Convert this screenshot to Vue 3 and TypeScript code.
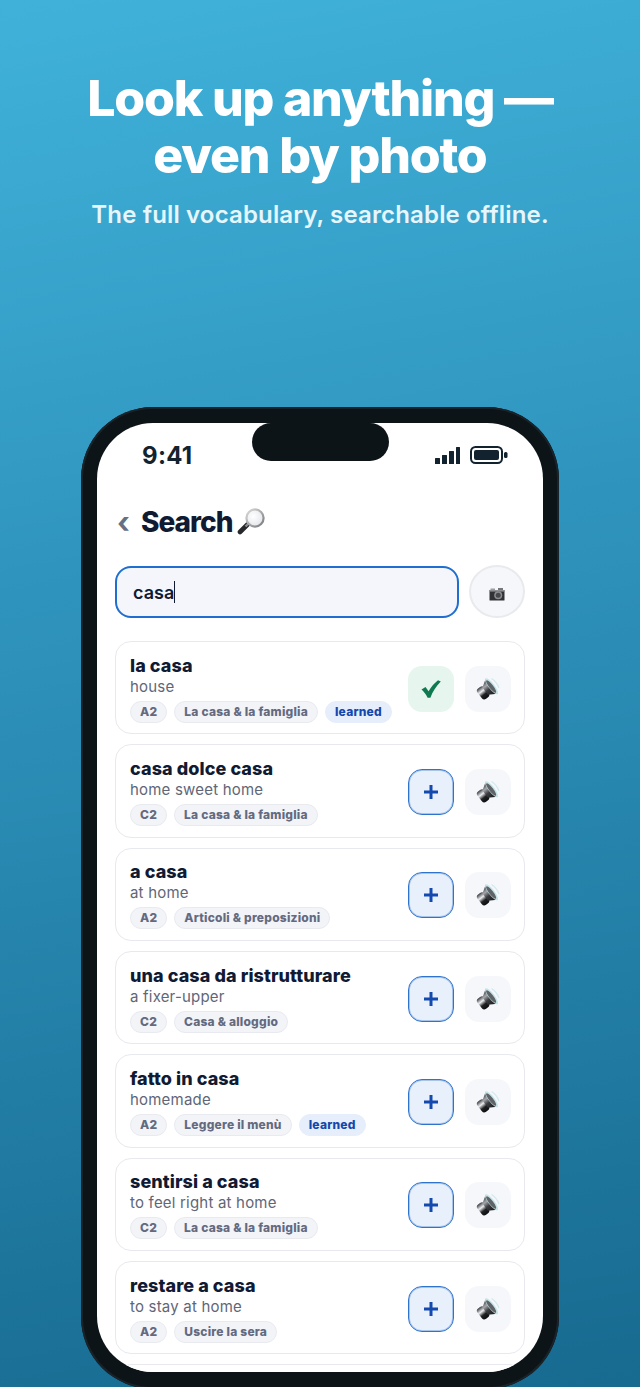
<template>
  <div class="page">
    <header class="hero">
      <h1>Look up anything —<br />even by photo</h1>
      <p>The full vocabulary, searchable offline.</p>
    </header>

    <div class="phone">
      <div class="screen">
        <div class="island"></div>

        <div class="status">
          <span class="time">9:41</span>
          <div class="status-icons">
            <svg width="26" height="17" viewBox="0 0 26 17">
              <rect x="0" y="11" width="5" height="6" rx="0.5" />
              <rect x="7" y="8" width="5" height="9" rx="0.5" />
              <rect x="14" y="4" width="5" height="13" rx="0.5" />
              <rect x="21" y="0" width="4" height="17" rx="0.5" />
            </svg>
            <svg width="38" height="18" viewBox="0 0 38 18">
              <rect x="1" y="1" width="31" height="16" rx="4.5" fill="none" stroke="#12232f" stroke-width="2" />
              <rect x="4" y="4" width="25" height="10" rx="2" />
              <rect x="34" y="6" width="3.5" height="6" rx="1.5" />
            </svg>
          </div>
        </div>

        <div class="title-row">
          <span class="back">‹</span>
          <h2>Search</h2>
          <svg class="glass" width="30" height="30" viewBox="0 0 30 30">
            <defs>
              <radialGradient id="lens" cx="0.4" cy="0.4" r="0.7">
                <stop offset="0" stop-color="#ffffff" />
                <stop offset="1" stop-color="#dfe3e8" />
              </radialGradient>
              <linearGradient id="rim" x1="0" y1="0" x2="1" y2="1">
                <stop offset="0" stop-color="#dcdcdc" />
                <stop offset="1" stop-color="#77797c" />
              </linearGradient>
            </defs>
            <path d="M10.5 17.5 L3 25" stroke="#26282b" stroke-width="4.6" stroke-linecap="round" />
            <path d="M11.5 16.5 L8.5 19.5" stroke="#8b8e92" stroke-width="2.4" />
            <circle cx="18" cy="11" r="8.6" fill="url(#lens)" stroke="url(#rim)" stroke-width="2.2" />
          </svg>
        </div>

        <div class="search-row">
          <div class="search-box">
            <span class="query">casa</span><span class="caret"></span>
          </div>
          <button class="camera" type="button">
            <svg width="16" height="13" viewBox="0 0 16 13">
              <rect x="1.5" y="0.5" width="4.5" height="2" fill="#9a9c9f" />
              <rect x="9" y="0" width="5" height="2.5" fill="#75777b" />
              <rect x="0.5" y="2" width="15" height="10.5" rx="0.6" fill="#303235" />
              <rect x="0.5" y="2" width="15" height="1.6" fill="#8d8f93" />
              <circle cx="9.2" cy="7.2" r="4" fill="#8a8d91" />
              <circle cx="9.2" cy="7.2" r="2.5" fill="#45474b" />
            </svg>
          </button>
        </div>

        <div class="results">
          <div v-for="entry in entries" :key="entry.word" class="card">
            <div class="card-text">
              <div class="word">{{ entry.word }}</div>
              <div class="gloss">{{ entry.gloss }}</div>
              <div class="chips">
                <span class="chip">{{ entry.level }}</span>
                <span class="chip">{{ entry.topic }}</span>
                <span v-if="entry.learned" class="chip chip-learned">learned</span>
              </div>
            </div>
            <div class="actions">
              <button v-if="entry.added" class="act act-done" type="button">
                <svg width="20" height="20" viewBox="0 0 20 20">
                  <path d="M0.5 10.5 L4.5 8 L7.6 12.2 C10 8 13.2 4.2 17 1.2 L19.8 2.6 C15 7.6 11.6 12.8 9.4 18.8 L6.6 18.8 C5 15.4 3 12.6 0.5 10.5 Z" fill="#0f7a50" />
                </svg>
              </button>
              <button v-else class="act act-add" type="button">
                <svg width="16" height="16" viewBox="0 0 16 16">
                  <path d="M8 1 V15 M1 8 H15" stroke="#1449ae" stroke-width="3" />
                </svg>
              </button>
              <button class="act act-sound" type="button">
                <svg width="24" height="24" viewBox="0 0 24 24">
                  <defs>
                    <linearGradient id="cone" x1="0" y1="0" x2="0" y2="1">
                      <stop offset="0" stop-color="#2a2c2f" />
                      <stop offset="0.3" stop-color="#a3a7ab" />
                      <stop offset="0.55" stop-color="#3a3c40" />
                      <stop offset="1" stop-color="#141517" />
                    </linearGradient>
                    <linearGradient id="magnet" x1="0" y1="0" x2="0" y2="1">
                      <stop offset="0" stop-color="#3a3c40" />
                      <stop offset="0.35" stop-color="#eceef0" />
                      <stop offset="0.65" stop-color="#1f2123" />
                      <stop offset="1" stop-color="#0c0d0e" />
                    </linearGradient>
                  </defs>
                  <g transform="rotate(-38 12 12)">
                    <rect x="1.5" y="5.5" width="8.5" height="13" rx="3" fill="url(#magnet)" />
                    <path d="M8.5 7.5 L16.5 2.5 L16.5 21.5 L8.5 16.5 Z" fill="url(#cone)" />
                    <ellipse cx="16.5" cy="12" rx="3" ry="9.8" fill="#c6e5e9" />
                    <ellipse cx="16" cy="12" rx="2" ry="7.8" fill="#5f6368" />
                    <path d="M21.2 6 C22.4 9.5 22.4 14.5 21.2 18" fill="none" stroke="#cfeaee" stroke-width="1.2" />
                  </g>
                </svg>
              </button>
            </div>
          </div>
          <div class="card"></div>
        </div>
      </div>
    </div>
  </div>
</template>

<script setup lang="ts">
interface Entry {
  word: string;
  gloss: string;
  level: string;
  topic: string;
  learned?: boolean;
  added?: boolean;
}

const entries: Entry[] = [
  { word: "la casa", gloss: "house", level: "A2", topic: "La casa & la famiglia", learned: true, added: true },
  { word: "casa dolce casa", gloss: "home sweet home", level: "C2", topic: "La casa & la famiglia" },
  { word: "a casa", gloss: "at home", level: "A2", topic: "Articoli & preposizioni" },
  { word: "una casa da ristrutturare", gloss: "a fixer-upper", level: "C2", topic: "Casa & alloggio" },
  { word: "fatto in casa", gloss: "homemade", level: "A2", topic: "Leggere il menù", learned: true },
  { word: "sentirsi a casa", gloss: "to feel right at home", level: "C2", topic: "La casa & la famiglia" },
  { word: "restare a casa", gloss: "to stay at home", level: "A2", topic: "Uscire la sera" },
];
</script>

<style>
body {
  margin: 0;
}
</style>

<style scoped>
.page {
  width: 640px;
  height: 1387px;
  overflow: hidden;
  background: linear-gradient(170deg, #40b2da 0%, #2f94bd 40%, #176a90 100%);
  font-family: Inter, "Noto Sans", sans-serif;
  color: #111a33;
}

.hero {
  padding-top: 70px;
  text-align: center;
  color: #fff;
}
.hero h1 {
  margin: 0;
  font-size: 50px;
  line-height: 57px;
  font-weight: 850;
  letter-spacing: -1.2px;
}
.hero p {
  margin: 15px 0 0;
  font-size: 24px;
  line-height: 32px;
  font-weight: 600;
  letter-spacing: 0.15px;
  color: #e6f6fc;
}

.phone {
  box-sizing: border-box;
  width: 478px;
  height: 982px;
  margin: 176px 0 0 81px;
  padding: 16px;
  background: #0d1418;
  border-radius: 72px;
  box-shadow: inset 0 0 0 2px #1a2329;
}
.screen {
  position: relative;
  box-sizing: border-box;
  height: 949px;
  padding: 0 18px;
  background: #fff;
  border-radius: 56px;
  overflow: hidden;
}
.island {
  position: absolute;
  top: 0;
  left: 155px;
  width: 137px;
  height: 38px;
  background: #0d1418;
  border-radius: 19px;
}

.status {
  display: flex;
  justify-content: space-between;
  align-items: center;
  height: 32px;
  padding: 16px 17px 0 27px;
}
.time {
  font-size: 24px;
  font-weight: 700;
  letter-spacing: 0.3px;
  color: #12232f;
}
.status-icons {
  display: flex;
  align-items: center;
  gap: 9px;
  fill: #12232f;
}

.title-row {
  display: flex;
  align-items: center;
  height: 36px;
  margin-top: 33px;
  padding-left: 2px;
}
.back {
  width: 24px;
  font-size: 30px;
  font-weight: 700;
  line-height: 36px;
  color: #667085;
}
.title-row h2 {
  margin: 0;
  font-size: 28px;
  line-height: 36px;
  font-weight: 850;
  letter-spacing: -1px;
  color: #111a33;
}
.glass {
  margin-left: 5px;
}

.search-row {
  display: flex;
  align-items: flex-start;
  gap: 10px;
  margin-top: 25px;
}
.search-box {
  box-sizing: border-box;
  display: flex;
  align-items: center;
  flex: 1;
  height: 52px;
  margin-top: 1px;
  padding: 0 16px;
  background: #f4f6fb;
  border: 2px solid #1f6fd0;
  border-radius: 16px;
}
.query {
  font-size: 18px;
  font-weight: 600;
  color: #111a33;
}
.caret {
  width: 1px;
  height: 22px;
  background: #111a33;
}
.camera {
  box-sizing: border-box;
  display: flex;
  align-items: center;
  justify-content: center;
  width: 56px;
  height: 53px;
  padding: 5px 0 0;
  background: #f6f7fa;
  border: 2px solid #e8eaee;
  border-radius: 50%;
}

.results {
  display: flex;
  flex-direction: column;
  gap: 10px;
  margin-top: 23px;
}
.card {
  box-sizing: border-box;
  display: flex;
  align-items: center;
  justify-content: space-between;
  flex: none;
  height: 93.33px;
  padding: 2px 13px 0 14px;
  background: #fff;
  border: 1px solid #e7e9ee;
  border-radius: 16px;
}
.word {
  font-size: 18px;
  line-height: 22px;
  font-weight: 850;
  letter-spacing: 0.08px;
  color: #111a33;
}
.gloss {
  font-size: 15px;
  line-height: 20px;
  letter-spacing: 0.2px;
  color: #5f6678;
}
.chips {
  display: flex;
  gap: 7px;
  margin-top: 4px;
}
.chip {
  box-sizing: border-box;
  height: 22px;
  padding: 0 9px;
  font-size: 12px;
  line-height: 20px;
  font-weight: 800;
  letter-spacing: 0.22px;
  color: #636a80;
  background: #f3f4f8;
  border: 1px solid #e8eaef;
  border-radius: 11px;
}
.chip-learned {
  color: #1447ad;
  background: #e6eefb;
  border-color: #e6eefb;
}

.actions {
  display: flex;
  gap: 11px;
}
.act {
  box-sizing: border-box;
  display: flex;
  align-items: center;
  justify-content: center;
  width: 46px;
  height: 46px;
  padding: 0;
  border: none;
  border-radius: 14px;
}
.act-done {
  background: #e6f5ee;
}
.act-add {
  background: #e8f0fc;
  border: 1px solid #2f74cc;
  box-shadow: inset 0 0 0 1px rgba(47, 116, 204, 0.35);
}
.act-sound {
  background: #f5f7fb;
}
</style>
